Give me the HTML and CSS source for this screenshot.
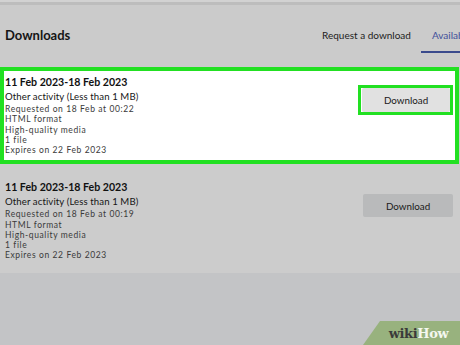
FILE: index.html
```html
<!DOCTYPE html>
<html>
<head>
<meta charset="utf-8">
<link rel="stylesheet" href="styles.css">
</head>
<body>
<div class="page">
  <div class="topline"></div>
  <header class="header">
    <h1 class="title">Downloads</h1>
    <nav class="tabs">
      <span class="tab">Request a download</span>
      <span class="tab active">Available downloads</span>
    </nav>
  </header>
  <section class="list">
    <div class="card highlight">
      <div class="info">
        <div class="range">11 Feb 2023-18 Feb 2023</div>
        <div class="kind">Other activity (Less than 1 MB)</div>
        <div class="meta">Requested on 18 Feb at 00:22</div>
        <div class="meta">HTML format</div>
        <div class="meta">High-quality media</div>
        <div class="meta">1 file</div>
        <div class="meta">Expires on 22 Feb 2023</div>
      </div>
      <div class="btn-wrap hl"><button class="btn light">Download</button></div>
    </div>
    <div class="card plain">
      <div class="info">
        <div class="range">11 Feb 2023-18 Feb 2023</div>
        <div class="kind">Other activity (Less than 1 MB)</div>
        <div class="meta">Requested on 18 Feb at 00:19</div>
        <div class="meta">HTML format</div>
        <div class="meta">High-quality media</div>
        <div class="meta">1 file</div>
        <div class="meta">Expires on 22 Feb 2023</div>
      </div>
      <div class="btn-wrap"><button class="btn">Download</button></div>
    </div>
  </section>
  <footer class="foot">
    <div class="logo"><span class="wiki">wiki</span><span class="how">How</span></div>
  </footer>
</div>
</body>
</html>
```

FILE: styles.css
```css
html, body {
  margin: 0;
  padding: 0;
}
body {
  width: 460px;
  height: 345px;
  overflow: hidden;
  background: #c3c4c6;
  font-family: "Lato", "Noto Sans", sans-serif;
  color: #1b1b1b;
}
.page {
  display: flex;
  flex-direction: column;
  height: 345px;
}
.topline {
  height: 2px;
  background: #d2d2d2;
  border-bottom: 3px solid #bdbdbd;
}
.header {
  display: flex;
  align-items: flex-start;
  height: 62px;
  background: #cbcbcb;
  padding-left: 5px;
  overflow: hidden;
}
.title {
  flex: 0 0 317px;
  margin: 22px 0 0 0;
  font-size: 13px;
  line-height: 16px;
  font-weight: 700;
  color: #151515;
}
.tabs {
  flex: 0 0 auto;
  display: flex;
  margin-top: 23px;
  white-space: nowrap;
}
.tab {
  font-size: 10px;
  line-height: 14px;
  color: #222;
  padding-bottom: 9px;
  padding-right: 10px;
}
.tab.active {
  color: #3f4f9a;
  padding-left: 11px;
  border-bottom: 2px solid #3a4a8c;
}
.list {
  background: #cccccc;
  display: flex;
  flex-direction: column;
  gap: 6px;
  padding-bottom: 4px;
}
.card {
  display: flex;
  justify-content: space-between;
  align-items: flex-start;
}
.card.highlight {
  background: #ffffff;
  border: 4px solid #22e022;
  margin-right: 1px;
  padding: 3px 2px 5px 1px;
}
.card.plain {
  padding: 9px 7px 8px 5px;
}
.range {
  font-size: 10.6px;
  font-weight: 700;
  line-height: 16px;
  color: #111;
}
.kind {
  font-size: 9.6px;
  letter-spacing: 0.1px;
  line-height: 14px;
  color: #151515;
}
.meta {
  font-size: 8.5px;
  letter-spacing: 0.6px;
  line-height: 10.25px;
  color: #3a3a3a;
}
.btn-wrap {
  margin-top: 15px;
}
.btn-wrap.hl {
  border: 3px solid #22e022;
  padding: 0 0 0 1px;
  margin-top: 11px;
}
.btn {
  display: block;
  width: 90px;
  height: 23px;
  border: none;
  border-radius: 2px;
  background: #b9babb;
  font-family: "Lato", "Noto Sans", sans-serif;
  font-size: 9.8px;
  color: #1a1a1a;
}
.btn.light {
  background: #e1e1e1;
  width: 88px;
  height: 24px;
}
.foot {
  flex: 1;
  display: flex;
  justify-content: flex-end;
  align-items: flex-end;
}
.logo {
  background: #98b27e;
  height: 24px;
  width: 97px;
  box-sizing: border-box;
  padding-left: 14px;
  clip-path: polygon(17px 0, 100% 0, 100% 100%, 0 100%);
  display: flex;
  align-items: center;
  justify-content: center;
  font-family: "DejaVu Serif", "Liberation Serif", serif;
  font-weight: 700;
  font-size: 13px;
  letter-spacing: -0.4px;
}
.wiki { color: #3a3a3a; }
.how { color: #f4f7f0; }
```
